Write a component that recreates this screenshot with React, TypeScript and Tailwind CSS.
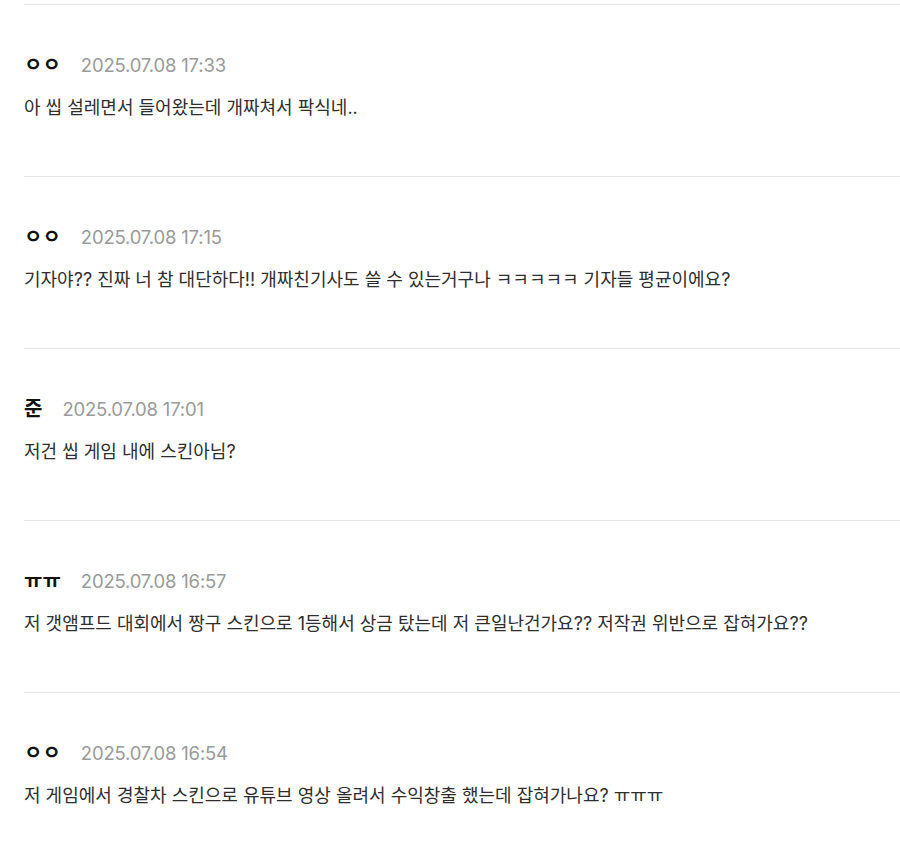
import React from "react";

const comments = [
  { name: "ㅇㅇ", date: "2025.07.08 17:33", body: "아 씹 설레면서 들어왔는데 개짜쳐서 팍식네.." },
  { name: "ㅇㅇ", date: "2025.07.08 17:15", body: "기자야?? 진짜 너 참 대단하다!! 개짜친기사도 쓸 수 있는거구나 ㅋㅋㅋㅋㅋ 기자들 평균이에요?" },
  { name: "준", date: "2025.07.08 17:01", body: "저건 씹 게임 내에 스킨아님?" },
  { name: "ㅠㅠ", date: "2025.07.08 16:57", body: "저 갯앰프드 대회에서 짱구 스킨으로 1등해서 상금 탔는데 저 큰일난건가요?? 저작권 위반으로 잡혀가요??" },
  { name: "ㅇㅇ", date: "2025.07.08 16:54", body: "저 게임에서 경찰차 스킨으로 유튜브 영상 올려서 수익창출 했는데 잡혀가나요? ㅠㅠㅠ" },
];

export default function App() {
  return (
    <div
      className="min-h-[863px] bg-white pt-[4px] pl-6 overflow-hidden"
      style={{ fontFamily: "Inter, 'Noto Sans CJK KR', sans-serif" }}
    >
      {comments.map((c, i) => (
        <div key={i} className="border-t border-[#e6e6e6] pt-[46px] pb-[54px]">
          <div className="flex h-[28px] items-center gap-5">
            <span className="text-[20px] font-bold leading-[28px] text-[#111111]">{c.name}</span>
            <span className="text-[18.5px] leading-[28px] tracking-[-0.01em] text-[#9a9a9a]">{c.date}</span>
          </div>
          <p className="mt-[15px] text-[18px] leading-[28px] text-[#2e2e2e] whitespace-nowrap">
            {c.body}
          </p>
        </div>
      ))}
    </div>
  );
}
